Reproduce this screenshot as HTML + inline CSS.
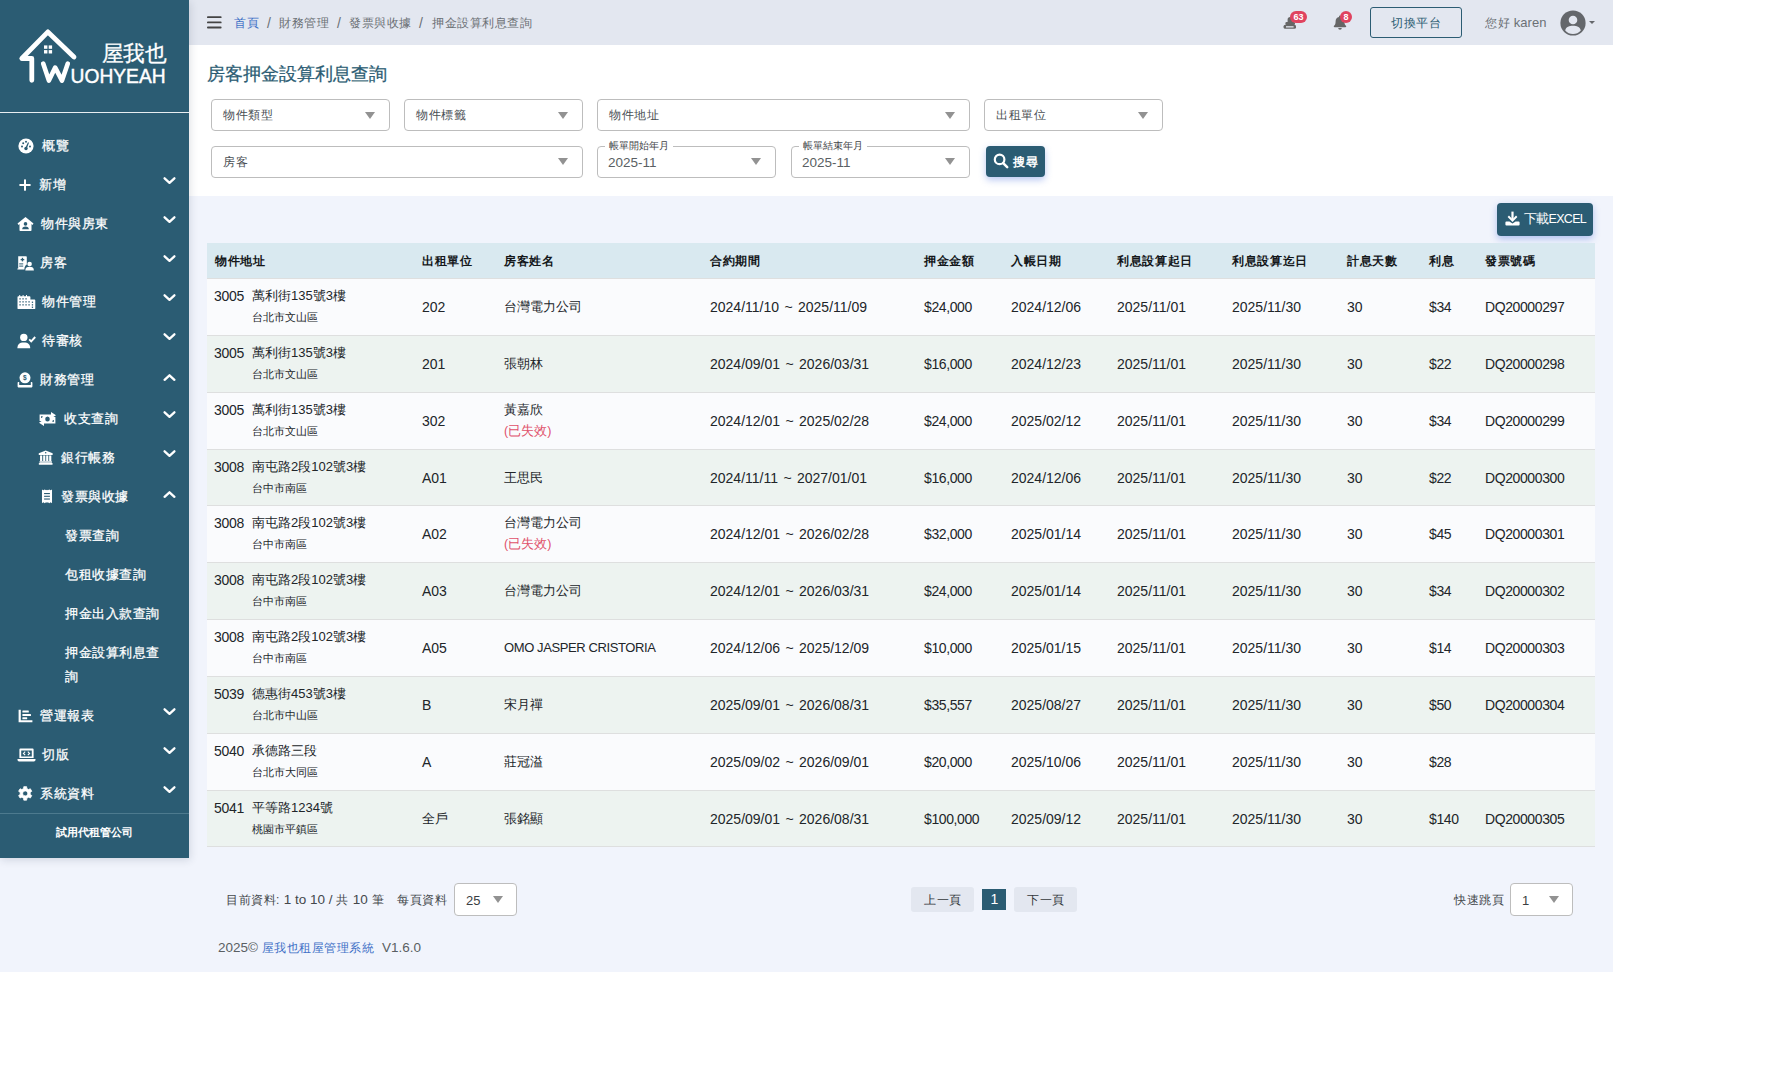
<!DOCTYPE html>
<html lang="zh-Hant">
<head>
<meta charset="utf-8">
<title>房客押金設算利息查詢</title>
<style>
*{box-sizing:border-box;margin:0;padding:0}
html,body{width:1775px;height:1080px;background:#fff;overflow:hidden}
body{font-family:"Liberation Sans",sans-serif;font-size:14px;color:#3c4043;position:relative}
#page{position:absolute;left:0;top:0;width:1613px;height:972px;background:#f1f4fc;overflow:hidden}
#side{position:absolute;left:0;top:0;width:189px;height:858px;background:#2b5c73;color:#fff;box-shadow:1px 2px 8px rgba(30,40,70,.15);z-index:5}
#side .logo{position:absolute;left:0;top:0;width:189px;height:113px;border-bottom:1px solid #e8eef1}
#side .mi{position:absolute;left:0;width:189px;height:39px;font-size:13px;letter-spacing:.5px;line-height:20px;color:#fff}
#side .mi .t{position:absolute;top:10px;white-space:nowrap;-webkit-text-stroke:.25px #fff}
#side .mi svg.ic{position:absolute;fill:#fff}
#side .mi svg.ch{position:absolute;left:162.6px;top:11px;width:13px;height:9px;fill:none;stroke:#fff;stroke-width:2.3;stroke-linecap:round;stroke-linejoin:round}
#side .co{position:absolute;left:0;top:813px;width:189px;height:45px;border-top:1px solid #4d7a8e;text-align:center;font-size:11px;letter-spacing:0;line-height:36px;color:#fff;font-weight:bold}
#top{position:absolute;left:189px;top:0;width:1424px;height:45px;background:#e3e7f0}
#top .bc{position:absolute;top:15px;font-size:12px;letter-spacing:.5px;line-height:16px;color:#6b7075;white-space:nowrap}
#panel{position:absolute;left:189px;top:45px;width:1424px;height:151px;background:#fff}
h1{position:absolute;left:207px;top:62px;font-size:18px;line-height:24px;font-weight:normal;color:#2b5c73;white-space:nowrap;letter-spacing:0;-webkit-text-stroke:.25px #2b5c73}
.sel{position:absolute;height:32px;border:1px solid #bdbdbd;border-radius:4px;background:#fff;font-size:12px;letter-spacing:.5px;line-height:30px;color:#4a4f54;padding-left:11px;white-space:nowrap}
.sel:after{content:"";position:absolute;right:14px;top:11px;border-left:5.5px solid transparent;border-right:5.5px solid transparent;border-top:7px solid #929292}
.sel .lb{position:absolute;left:7px;top:-6px;background:#fff;padding:0 4px;font-size:10px;letter-spacing:0;line-height:10px;color:#3f4448}
.sel .v{font-size:13.5px;letter-spacing:0;color:#5a5f63;position:relative;left:-1px;top:1px}
.sel.pgs:after{right:13px;top:12px}
.sel.r1:after{top:12px}
.sel.pgs .v{font-size:13px;left:0;top:2px;color:#3a3e42}
.btn{position:absolute;background:#2b5c73;color:#fff;border-radius:4px;box-shadow:0 3px 7px rgba(70,110,220,.38);font-size:12.5px;white-space:nowrap}
#th{position:absolute;left:207px;top:243px;width:1388px;height:36px;background:#d9e9f0;border-bottom:1px solid #dedfdf}
#th span{position:absolute;top:10px;font-size:12px;letter-spacing:.7px;line-height:16px;font-weight:bold;color:#14171a;white-space:nowrap}
.tr{position:absolute;left:207px;width:1388px;border-bottom:1px solid #dedfdf}
.tr.odd{background:#fafbfd}
.tr.even{background:#edf3f0}
.c{position:absolute;white-space:nowrap;color:#212529}
.c.dr{word-spacing:1.5px}
.c.n{letter-spacing:-.4px}
.c.m{top:50%;margin-top:-9px;font-size:14px;line-height:18px}
.c.a1{top:8px;font-size:14px;line-height:18px;letter-spacing:-.3px}
.c.cj{font-size:13px;letter-spacing:0}
.c.lat{font-size:13px;letter-spacing:-.4px}
.c.a2{top:30px;font-size:11px;line-height:16px}
.c.red{color:#e0506a;font-size:12.5px}
.pg{position:absolute;font-size:12px;letter-spacing:.5px;line-height:16px;color:#44484c;white-space:nowrap}
.pg span.l{font-size:13.5px;letter-spacing:0}
.pb{position:absolute;top:887px;height:25px;background:#e3e7f0;border-radius:3px;font-size:12px;letter-spacing:.5px;line-height:26px;text-align:center;color:#33373b;padding-left:1px}
</style>
</head>
<body>
<div id="page">
<div id="side">
<div class="logo">
<svg width="189" height="112" viewBox="0 0 189 112" style="position:absolute;left:0;top:0">
<g fill="none" stroke="#fff" stroke-linecap="round" stroke-linejoin="round">
<path d="M74 57 L47.9 31.9 L21.8 58.5 L31.8 58.5 L31.8 80.3" stroke-width="4.8"/>
<path d="M43.2 63.6 L48.9 80.6 L55.2 67.6 L62 80.6 L67.8 63.6" stroke-width="4.6"/>
</g>
<g fill="#fff"><rect x="44" y="45.4" width="3.4" height="3.4"/><rect x="48.7" y="45.4" width="3.4" height="3.4"/><rect x="44" y="50.1" width="3.4" height="3.4"/><rect x="48.7" y="50.1" width="3.4" height="3.4"/></g>
<text x="70.6" y="82.6" font-family="Liberation Sans, sans-serif" font-size="19.8" fill="#fff" stroke="#fff" stroke-width=".45" textLength="95" lengthAdjust="spacingAndGlyphs">UOHYEAH</text>
<text x="101.5" y="61.3" font-family="Liberation Sans, sans-serif" font-size="21.5" fill="#fff" stroke="#fff" stroke-width=".3" textLength="65" lengthAdjust="spacingAndGlyphs">屋我也</text>
</svg>
</div>
<div class="mi" style="top:126px;height:39px"><svg class="ic" style="left:18px;top:12px" width="16" height="16" viewBox="0 0 16 16"><circle cx="8" cy="8" r="7.6"/><g fill="#2b5c73"><circle cx="8" cy="10.5" r="1.7"/><path d="M7.3 10 L10 4.2 L11 4.7 L8.8 10.6z"/><circle cx="4" cy="8.6" r="1"/><circle cx="5.2" cy="5.2" r="1"/><circle cx="8" cy="3.8" r="1"/><circle cx="12" cy="8.6" r="1"/></g></svg><span class="t" style="left:42px">概覽</span></div>
<div class="mi" style="top:165px;height:39px"><svg class="ic" style="left:18px;top:13px" width="14" height="14" viewBox="0 0 14 14"><rect x="6" y="1.2" width="2" height="11.6" rx=".9"/><rect x="1.2" y="6" width="11.6" height="2" rx=".9"/></svg><span class="t" style="left:39px">新增</span><svg class="ch" viewBox="0 0 13 9"><path d="M1.6 2.3 L6.5 6.8 L11.4 2.3"/></svg></div>
<div class="mi" style="top:204px;height:39px"><svg class="ic" style="left:17px;top:12px" width="17" height="16" viewBox="0 0 17 16"><path d="M8.5 1 L0.5 7.6 L1.5 8.9 L2.5 8.1 V14.2 a.8 .8 0 0 0 .8 .8 H13.7 a.8 .8 0 0 0 .8 -.8 V8.1 L15.5 8.9 L16.5 7.6z"/><g fill="#2b5c73"><circle cx="8.5" cy="7.9" r="1.8"/><path d="M5.2 13.2 c0-1.8 1.2-2.6 3.3-2.6 s3.3 .8 3.3 2.6z"/></g></svg><span class="t" style="left:41px">物件與房東</span><svg class="ch" viewBox="0 0 13 9"><path d="M1.6 2.3 L6.5 6.8 L11.4 2.3"/></svg></div>
<div class="mi" style="top:243px;height:39px"><svg class="ic" style="left:17px;top:12px" width="17" height="16" viewBox="0 0 17 16"><path d="M1.2 1.2 H9 a.8 .8 0 0 1 .8 .8 V9.5 c-1.6 1 -2.4 2.6 -2.4 5 H0.4 V13.4 h.8z"/><circle cx="12.6" cy="9" r="2.3"/><path d="M8.3 15.4 c0-2.6 1.6-3.6 4.3-3.6 s4.3 1 4.3 3.6z"/><g fill="#2b5c73"><rect x="4.8" y="2.8" width="1.3" height="3.6"/><rect x="3.65" y="3.95" width="3.6" height="1.3"/><rect x="2.2" y="8.4" width="4" height="1"/><rect x="2.2" y="10.6" width="4" height="1"/></g></svg><span class="t" style="left:40px">房客</span><svg class="ch" viewBox="0 0 13 9"><path d="M1.6 2.3 L6.5 6.8 L11.4 2.3"/></svg></div>
<div class="mi" style="top:282px;height:39px"><svg class="ic" style="left:17px;top:12px" width="19" height="16" viewBox="0 0 19 16"><path d="M1.4 2.2 H2.2 V0.9 H3.2 V2.2 H5.6 V0.9 H6.6 V2.2 H9 V0.9 H10 V2.2 H12.6 a.8 .8 0 0 1 .8 .8 V5.6 H17.4 a.9 .9 0 0 1 .9 .9 V14.2 a.9 .9 0 0 1 -.9 .9 H1.4 a.9 .9 0 0 1 -.9 -.9 V3.1 a.9 .9 0 0 1 .9 -.9z"/><g fill="#2b5c73"><rect x="2.4" y="4.2" width="1.3" height="1.3"/><rect x="5.4" y="4.2" width="1.3" height="1.3"/><rect x="8.4" y="4.2" width="1.3" height="1.3"/><rect x="2.4" y="7.2" width="1.3" height="1.3"/><rect x="5.4" y="7.2" width="1.3" height="1.3"/><rect x="8.4" y="7.2" width="1.3" height="1.3"/><rect x="2.4" y="10.2" width="1.3" height="1.3"/><rect x="5.4" y="10.2" width="1.3" height="1.3"/><rect x="8.4" y="10.2" width="1.3" height="1.3"/><rect x="11.4" y="7.2" width="1.3" height="1.3"/><rect x="11.4" y="10.2" width="1.3" height="1.3"/><rect x="14.8" y="7.6" width="1.3" height="1.3"/><rect x="14.8" y="10.2" width="1.3" height="1.3"/><rect x="14.8" y="12.6" width="1.3" height="1.3"/></g></svg><span class="t" style="left:42px">物件管理</span><svg class="ch" viewBox="0 0 13 9"><path d="M1.6 2.3 L6.5 6.8 L11.4 2.3"/></svg></div>
<div class="mi" style="top:321px;height:39px"><svg class="ic" style="left:17px;top:12px" width="19" height="16" viewBox="0 0 19 16"><circle cx="6.8" cy="4.4" r="3.7"/><path d="M0.4 15.2 c0-4 2-5.8 6.4-5.8 s6.4 1.8 6.4 5.8z"/><path d="M12.2 6.3 l2 2 l4-4.3" fill="none" stroke="#fff" stroke-width="1.9"/></svg><span class="t" style="left:42px">待審核</span><svg class="ch" viewBox="0 0 13 9"><path d="M1.6 2.3 L6.5 6.8 L11.4 2.3"/></svg></div>
<div class="mi" style="top:360px;height:39px"><svg class="ic" style="left:17px;top:12px" width="16" height="16" viewBox="0 0 16 16"><path d="M0.6 10.8 a.8 .8 0 0 1 .8 -.8 H14.6 a.8 .8 0 0 1 .8 .8 V14.6 a.8 .8 0 0 1 -.8 .8 H1.4 a.8 .8 0 0 1 -.8 -.8z"/><rect x="2.2" y="9.4" width="11.6" height="3.6" fill="#2b5c73"/><circle cx="8" cy="5.8" r="5.5"/><text x="8" y="8.2" text-anchor="middle" font-family="Liberation Sans" font-weight="bold" font-size="6.6" fill="#2b5c73">$</text></svg><span class="t" style="left:40px">財務管理</span><svg class="ch" style="top:12.5px" viewBox="0 0 13 9"><path d="M1.6 6.8 L6.5 2.3 L11.4 6.8"/></svg></div>
<div class="mi" style="top:399px;height:39px"><svg class="ic" style="left:38px;top:12px" width="19" height="16" viewBox="0 0 19 16"><path d="M1.6 3.6 H13 V1 L18 4.2 L15.4 6 H17.4 V12.4 H6 V15 L1 11.8 L3.6 10 H1.6z"/><g fill="#2b5c73"><ellipse cx="9.5" cy="8" rx="2.3" ry="2.5"/><path d="M3 5.2 h1.8 a1.8 1.8 0 0 1 -1.8 1.8z"/><path d="M16 10.8 h-1.8 a1.8 1.8 0 0 1 1.8 -1.8z"/></g></svg><span class="t" style="left:64px">收支查詢</span><svg class="ch" viewBox="0 0 13 9"><path d="M1.6 2.3 L6.5 6.8 L11.4 2.3"/></svg></div>
<div class="mi" style="top:438px;height:39px"><svg class="ic" style="left:38.4px;top:12px" width="15.4" height="15" viewBox="0 0 16 16"><path d="M8 0.4 L15.4 3.4 V5.2 H0.6 V3.4z"/><circle cx="8" cy="3" r=".8" fill="#2b5c73"/><rect x="2" y="5.8" width="2.3" height="6"/><rect x="5.3" y="5.8" width="2.3" height="6"/><rect x="8.5" y="5.8" width="2.3" height="6"/><rect x="11.7" y="5.8" width="2.3" height="6"/><rect x="1.4" y="12" width="13.2" height="1.6"/><rect x="0.6" y="13.8" width="14.8" height="1.8" rx=".5"/></svg><span class="t" style="left:61px">銀行帳務</span><svg class="ch" viewBox="0 0 13 9"><path d="M1.6 2.3 L6.5 6.8 L11.4 2.3"/></svg></div>
<div class="mi" style="top:477px;height:39px"><svg class="ic" style="left:40.5px;top:12px" width="12" height="14.6" viewBox="0 0 12 16"><path d="M0.5 0.5 L2 1.5 L3.5 0.5 L5 1.5 L6 .8 L7 1.5 L8.5 .5 L10 1.5 L11.5 .5 V15.5 L10 14.5 L8.5 15.5 L7 14.5 L6 15.2 L5 14.5 L3.5 15.5 L2 14.5 L.5 15.5z"/><g fill="#2b5c73"><rect x="2.8" y="4.4" width="6.4" height="1.2"/><rect x="2.8" y="7.4" width="6.4" height="1.2"/><rect x="2.8" y="10.4" width="6.4" height="1.2"/></g></svg><span class="t" style="left:61px">發票與收據</span><svg class="ch" style="top:12.5px" viewBox="0 0 13 9"><path d="M1.6 6.8 L6.5 2.3 L11.4 6.8"/></svg></div>
<div class="mi" style="top:516px;height:39px"><span class="t" style="left:65px">發票查詢</span></div>
<div class="mi" style="top:555px;height:39px"><span class="t" style="left:65px">包租收據查詢</span></div>
<div class="mi" style="top:594px;height:39px"><span class="t" style="left:65px">押金出入款查詢</span></div>
<div class="mi" style="top:633px;height:63px"><span class="t" style="left:65px;line-height:24px;top:8px">押金設算利息查<br>詢</span></div>
<div class="mi" style="top:696px;height:39px"><svg class="ic" style="left:18px;top:13px" width="15" height="14" viewBox="0 0 15 14"><path d="M0.6 0.8 H2.8 V11.2 H14.4 V13.2 H0.6z"/><rect x="4.4" y="1.6" width="6.4" height="2" rx=".5"/><rect x="4.4" y="5" width="8.6" height="2" rx=".5"/><rect x="4.4" y="8.2" width="4.8" height="2" rx=".5"/></svg><span class="t" style="left:40px">營運報表</span><svg class="ch" viewBox="0 0 13 9"><path d="M1.6 2.3 L6.5 6.8 L11.4 2.3"/></svg></div>
<div class="mi" style="top:735px;height:39px"><svg class="ic" style="left:17px;top:13px" width="19" height="14" viewBox="0 0 19 14"><path d="M2.4 1.6 a1 1 0 0 1 1 -1 H15.6 a1 1 0 0 1 1 1 V10 H2.4z M4.2 2.4 V8.4 H14.8 V2.4z"/><path d="M0.5 11 H18.5 V11.8 a1.6 1.6 0 0 1 -1.6 1.6 H2.1 a1.6 1.6 0 0 1 -1.6 -1.6z"/><path d="M8.2 3.6 L6.4 5.4 L8.2 7.2 M10.8 3.6 L12.6 5.4 L10.8 7.2" fill="none" stroke="#fff" stroke-width="1.1"/></svg><span class="t" style="left:42px">切版</span><svg class="ch" viewBox="0 0 13 9"><path d="M1.6 2.3 L6.5 6.8 L11.4 2.3"/></svg></div>
<div class="mi" style="top:774px;height:39px"><svg class="ic" style="left:18px;top:12px" width="15" height="15" viewBox="0 0 15 15"><path d="M5.57 2.57 L5.77 0.65 L8.63 0.65 L8.83 2.57 L10.57 3.57 L12.33 2.78 L13.76 5.27 L12.20 6.39 L12.20 8.41 L13.76 9.53 L12.33 12.02 L10.57 11.23 L8.83 12.23 L8.63 14.15 L5.77 14.15 L5.57 12.23 L3.83 11.23 L2.07 12.02 L0.64 9.53 L2.20 8.41 L2.20 6.39 L0.64 5.27 L2.07 2.78 L3.83 3.57z M7.2 4.9 a2.5 2.5 0 1 0 .01 0z" fill-rule="evenodd" stroke="#fff" stroke-width=".8" stroke-linejoin="round"/></svg><span class="t" style="left:40px">系統資料</span><svg class="ch" viewBox="0 0 13 9"><path d="M1.6 2.3 L6.5 6.8 L11.4 2.3"/></svg></div>
<div class="co">試用代租管公司</div>
</div>
<div id="top">
<svg style="position:absolute;left:18px;top:16px" width="15" height="13" viewBox="0 0 15 13"><g fill="#444"><rect x="0" y="0.2" width="14.6" height="1.9" rx=".9"/><rect x="0" y="5.4" width="14.6" height="1.9" rx=".9"/><rect x="0" y="10.6" width="14.6" height="1.9" rx=".9"/></g></svg>
<span class="bc" style="left:45px;color:#3d6fc6">首頁</span>
<span class="bc" style="left:78px;font-size:14px;letter-spacing:0">/</span>
<span class="bc" style="left:90px">財務管理</span>
<span class="bc" style="left:148px;font-size:14px;letter-spacing:0">/</span>
<span class="bc" style="left:160px">發票與收據</span>
<span class="bc" style="left:230px;font-size:14px;letter-spacing:0">/</span>
<span class="bc" style="left:243px">押金設算利息查詢</span>
<!-- icon 1: hand holding / stack -->
<svg style="position:absolute;left:1094px;top:16px" width="15" height="14" viewBox="0 0 15 14"><g fill="#666"><path d="M4.6 3.6 a2.6 2.6 0 0 1 5.2 0 V7 H4.6z"/><rect x="2.4" y="6" width="9.6" height="3" rx="1.2"/><rect x=".6" y="8.8" width="12.4" height="4" rx="1.5"/></g><rect x="3" y="10.2" width="7.6" height="1.3" fill="#e3e7f0"/></svg>
<span style="position:absolute;left:1101px;top:11px;width:17px;height:12px;border-radius:6px;background:#e0435f;color:#fff;font-size:9px;line-height:12px;text-align:center;font-weight:bold">63</span>
<!-- bell -->
<svg style="position:absolute;left:1144px;top:15px" width="14" height="15" viewBox="0 0 14 15"><g fill="#666"><path d="M7 0.6 a1 1 0 0 1 1 1 v.4 c2.2 .5 3.4 2.2 3.4 4.4 c0 2.6 .8 3.6 1.6 4.4 c.5 .5 .2 1.4 -.6 1.4 H1.6 c-.8 0 -1.1 -.9 -.6 -1.4 c.8 -.8 1.6 -1.8 1.6 -4.4 c0 -2.2 1.2 -3.9 3.4 -4.4 v-.4 a1 1 0 0 1 1 -1z"/><path d="M5.2 13 h3.6 a1.8 1.8 0 0 1 -3.6 0z"/></g></svg>
<span style="position:absolute;left:1151px;top:11px;width:12px;height:12px;border-radius:6px;background:#e0435f;color:#fff;font-size:9px;line-height:12px;text-align:center;font-weight:bold">8</span>
<span style="position:absolute;left:1181px;top:7px;width:92px;height:31px;border:1px solid #2b5c73;border-radius:3px;font-size:12px;letter-spacing:.5px;line-height:31px;text-align:center;color:#2b5c73">切換平台</span>
<span style="position:absolute;left:1296px;top:14px;font-size:12px;letter-spacing:.5px;line-height:18px;color:#6b7075;white-space:nowrap">您好 <span style="font-size:13px;letter-spacing:0">karen</span></span>
<svg style="position:absolute;left:1371px;top:9.5px" width="26" height="26" viewBox="0 0 26 26"><circle cx="13" cy="13" r="12.6" fill="#64676b"/><circle cx="13" cy="10" r="4.3" fill="#e3e7f0"/><path d="M5.2 20.4 c1-3.6 4-4.6 7.8-4.6 s6.8 1 7.8 4.6 a10.4 10.4 0 0 1 -15.6 0z" fill="#e3e7f0"/></svg>
<span style="position:absolute;left:1400px;top:21px;border-left:3.2px solid transparent;border-right:3.2px solid transparent;border-top:3.6px solid #64676b"></span>
</div>
<div id="panel"></div>
<h1>房客押金設算利息查詢</h1>
<div class="sel r1" style="left:211px;top:99px;width:179px">物件類型</div>
<div class="sel r1" style="left:404px;top:99px;width:179px">物件標籤</div>
<div class="sel r1" style="left:597px;top:99px;width:373px">物件地址</div>
<div class="sel r1" style="left:984px;top:99px;width:179px">出租單位</div>
<div class="sel" style="left:211px;top:146px;width:372px">房客</div>
<div class="sel" style="left:597px;top:146px;width:179px"><span class="lb">帳單開始年月</span><span class="v">2025-11</span></div>
<div class="sel" style="left:791px;top:146px;width:179px"><span class="lb">帳單結束年月</span><span class="v">2025-11</span></div>
<div class="btn" style="left:986px;top:146px;width:59px;height:31px;line-height:31px"><svg style="position:absolute;left:7px;top:7px" width="16" height="16" viewBox="0 0 16 16"><circle cx="6.6" cy="6.4" r="4.8" fill="none" stroke="#fff" stroke-width="2.2"/><path d="M10.2 10.2 L14.2 14.2" stroke="#fff" stroke-width="2.5" stroke-linecap="round"/></svg><span style="position:absolute;left:27px;top:.5px;font-weight:bold;font-size:12px;letter-spacing:.5px">搜尋</span></div>
<div class="btn" style="left:1497px;top:203px;width:96px;height:33px;line-height:31px"><svg style="position:absolute;left:8px;top:8px" width="15" height="15" viewBox="0 0 15 15"><g fill="#fff"><rect x="6.4" y="0.6" width="2.2" height="8"/><path d="M2.6 6 L7.5 11 L12.4 6 L11 4.6 L7.5 8.2 L4 4.6z"/><path d="M1.4 10.4 H4.4 L7.5 12.6 L10.6 10.4 H13.6 a1 1 0 0 1 1 1 V13.6 a1 1 0 0 1 -1 1 H1.4 a1 1 0 0 1 -1 -1 V11.4 a1 1 0 0 1 1 -1z"/></g></svg><span style="position:absolute;left:27px;top:1px;letter-spacing:-.7px">下載EXCEL</span></div>
<div id="th">
<span style="left:8px">物件地址</span><span style="left:215px">出租單位</span><span style="left:297px">房客姓名</span><span style="left:503px">合約期間</span><span style="left:717px">押金金額</span><span style="left:804px">入帳日期</span><span style="left:910px">利息設算起日</span><span style="left:1025px">利息設算迄日</span><span style="left:1140px">計息天數</span><span style="left:1222px">利息</span><span style="left:1278px">發票號碼</span>
</div>
<div class="tr odd" style="top:279px;height:57px"><span class="c a1" style="left:7px">3005</span><span class="c a1 cj" style="left:45px">萬利街135號3樓</span><span class="c a2" style="left:45px">台北市文山區</span><span class="c m" style="left:215px">202</span><span class="c m cj" style="left:297px">台灣電力公司</span><span class="c m dr" style="left:503px">2024/11/10 ~ 2025/11/09</span><span class="c m n" style="left:717px">$24,000</span><span class="c m" style="left:804px">2024/12/06</span><span class="c m" style="left:910px">2025/11/01</span><span class="c m" style="left:1025px">2025/11/30</span><span class="c m" style="left:1140px">30</span><span class="c m n" style="left:1222px">$34</span><span class="c m n" style="left:1278px">DQ20000297</span></div>
<div class="tr even" style="top:336px;height:57px"><span class="c a1" style="left:7px">3005</span><span class="c a1 cj" style="left:45px">萬利街135號3樓</span><span class="c a2" style="left:45px">台北市文山區</span><span class="c m" style="left:215px">201</span><span class="c m cj" style="left:297px">張朝林</span><span class="c m dr" style="left:503px">2024/09/01 ~ 2026/03/31</span><span class="c m n" style="left:717px">$16,000</span><span class="c m" style="left:804px">2024/12/23</span><span class="c m" style="left:910px">2025/11/01</span><span class="c m" style="left:1025px">2025/11/30</span><span class="c m" style="left:1140px">30</span><span class="c m n" style="left:1222px">$22</span><span class="c m n" style="left:1278px">DQ20000298</span></div>
<div class="tr odd" style="top:393px;height:57px"><span class="c a1" style="left:7px">3005</span><span class="c a1 cj" style="left:45px">萬利街135號3樓</span><span class="c a2" style="left:45px">台北市文山區</span><span class="c m" style="left:215px">302</span><span class="c a1 cj" style="left:297px">黃嘉欣</span><span class="c a2 red" style="left:297px">(已失效)</span><span class="c m dr" style="left:503px">2024/12/01 ~ 2025/02/28</span><span class="c m n" style="left:717px">$24,000</span><span class="c m" style="left:804px">2025/02/12</span><span class="c m" style="left:910px">2025/11/01</span><span class="c m" style="left:1025px">2025/11/30</span><span class="c m" style="left:1140px">30</span><span class="c m n" style="left:1222px">$34</span><span class="c m n" style="left:1278px">DQ20000299</span></div>
<div class="tr even" style="top:450px;height:56px"><span class="c a1" style="left:7px">3008</span><span class="c a1 cj" style="left:45px">南屯路2段102號3樓</span><span class="c a2" style="left:45px">台中市南區</span><span class="c m" style="left:215px">A01</span><span class="c m cj" style="left:297px">王思民</span><span class="c m dr" style="left:503px">2024/11/11 ~ 2027/01/01</span><span class="c m n" style="left:717px">$16,000</span><span class="c m" style="left:804px">2024/12/06</span><span class="c m" style="left:910px">2025/11/01</span><span class="c m" style="left:1025px">2025/11/30</span><span class="c m" style="left:1140px">30</span><span class="c m n" style="left:1222px">$22</span><span class="c m n" style="left:1278px">DQ20000300</span></div>
<div class="tr odd" style="top:506px;height:57px"><span class="c a1" style="left:7px">3008</span><span class="c a1 cj" style="left:45px">南屯路2段102號3樓</span><span class="c a2" style="left:45px">台中市南區</span><span class="c m" style="left:215px">A02</span><span class="c a1 cj" style="left:297px">台灣電力公司</span><span class="c a2 red" style="left:297px">(已失效)</span><span class="c m dr" style="left:503px">2024/12/01 ~ 2026/02/28</span><span class="c m n" style="left:717px">$32,000</span><span class="c m" style="left:804px">2025/01/14</span><span class="c m" style="left:910px">2025/11/01</span><span class="c m" style="left:1025px">2025/11/30</span><span class="c m" style="left:1140px">30</span><span class="c m n" style="left:1222px">$45</span><span class="c m n" style="left:1278px">DQ20000301</span></div>
<div class="tr even" style="top:563px;height:57px"><span class="c a1" style="left:7px">3008</span><span class="c a1 cj" style="left:45px">南屯路2段102號3樓</span><span class="c a2" style="left:45px">台中市南區</span><span class="c m" style="left:215px">A03</span><span class="c m cj" style="left:297px">台灣電力公司</span><span class="c m dr" style="left:503px">2024/12/01 ~ 2026/03/31</span><span class="c m n" style="left:717px">$24,000</span><span class="c m" style="left:804px">2025/01/14</span><span class="c m" style="left:910px">2025/11/01</span><span class="c m" style="left:1025px">2025/11/30</span><span class="c m" style="left:1140px">30</span><span class="c m n" style="left:1222px">$34</span><span class="c m n" style="left:1278px">DQ20000302</span></div>
<div class="tr odd" style="top:620px;height:57px"><span class="c a1" style="left:7px">3008</span><span class="c a1 cj" style="left:45px">南屯路2段102號3樓</span><span class="c a2" style="left:45px">台中市南區</span><span class="c m" style="left:215px">A05</span><span class="c m lat" style="left:297px">OMO JASPER CRISTORIA</span><span class="c m dr" style="left:503px">2024/12/06 ~ 2025/12/09</span><span class="c m n" style="left:717px">$10,000</span><span class="c m" style="left:804px">2025/01/15</span><span class="c m" style="left:910px">2025/11/01</span><span class="c m" style="left:1025px">2025/11/30</span><span class="c m" style="left:1140px">30</span><span class="c m n" style="left:1222px">$14</span><span class="c m n" style="left:1278px">DQ20000303</span></div>
<div class="tr even" style="top:677px;height:57px"><span class="c a1" style="left:7px">5039</span><span class="c a1 cj" style="left:45px">德惠街453號3樓</span><span class="c a2" style="left:45px">台北市中山區</span><span class="c m" style="left:215px">B</span><span class="c m cj" style="left:297px">宋月禪</span><span class="c m dr" style="left:503px">2025/09/01 ~ 2026/08/31</span><span class="c m n" style="left:717px">$35,557</span><span class="c m" style="left:804px">2025/08/27</span><span class="c m" style="left:910px">2025/11/01</span><span class="c m" style="left:1025px">2025/11/30</span><span class="c m" style="left:1140px">30</span><span class="c m n" style="left:1222px">$50</span><span class="c m n" style="left:1278px">DQ20000304</span></div>
<div class="tr odd" style="top:734px;height:57px"><span class="c a1" style="left:7px">5040</span><span class="c a1 cj" style="left:45px">承德路三段</span><span class="c a2" style="left:45px">台北市大同區</span><span class="c m" style="left:215px">A</span><span class="c m cj" style="left:297px">莊冠溢</span><span class="c m dr" style="left:503px">2025/09/02 ~ 2026/09/01</span><span class="c m n" style="left:717px">$20,000</span><span class="c m" style="left:804px">2025/10/06</span><span class="c m" style="left:910px">2025/11/01</span><span class="c m" style="left:1025px">2025/11/30</span><span class="c m" style="left:1140px">30</span><span class="c m n" style="left:1222px">$28</span><span class="c m n" style="left:1278px"></span></div>
<div class="tr even" style="top:791px;height:56px"><span class="c a1" style="left:7px">5041</span><span class="c a1 cj" style="left:45px">平等路1234號</span><span class="c a2" style="left:45px">桃園市平鎮區</span><span class="c m cj" style="left:215px">全戶</span><span class="c m cj" style="left:297px">張銘顯</span><span class="c m dr" style="left:503px">2025/09/01 ~ 2026/08/31</span><span class="c m n" style="left:717px">$100,000</span><span class="c m" style="left:804px">2025/09/12</span><span class="c m" style="left:910px">2025/11/01</span><span class="c m" style="left:1025px">2025/11/30</span><span class="c m" style="left:1140px">30</span><span class="c m n" style="left:1222px">$140</span><span class="c m n" style="left:1278px">DQ20000305</span></div><span class="pg" style="left:226px;top:892px">目前資料: <span class="l">1 to 10 /</span> 共 <span class="l">10</span> 筆</span>
<span class="pg" style="left:397px;top:892px">每頁資料</span>
<div class="sel pgs" style="left:454px;top:883px;width:63px;height:33px"><span class="v">25</span></div>
<div class="pb" style="left:911px;width:63px">上一頁</div>
<div class="pb" style="left:982px;width:24px;top:889px;height:21px;line-height:21px;background:#2b5c73;color:#fff;border-radius:0;font-size:14px;letter-spacing:0">1</div>
<div class="pb" style="left:1014px;width:63px">下一頁</div>
<span class="pg" style="left:1454px;top:892px">快速跳頁</span>
<div class="sel pgs" style="left:1510px;top:883px;width:63px;height:33px"><span class="v">1</span></div>
<span class="pg" style="left:218px;top:940px;color:#5a5f63"><span class="l">2025©</span> <span style="color:#3d6fc6">屋我也租屋管理系統</span>&nbsp; <span class="l">V1.6.0</span></span>
</div>
</body>
</html>
